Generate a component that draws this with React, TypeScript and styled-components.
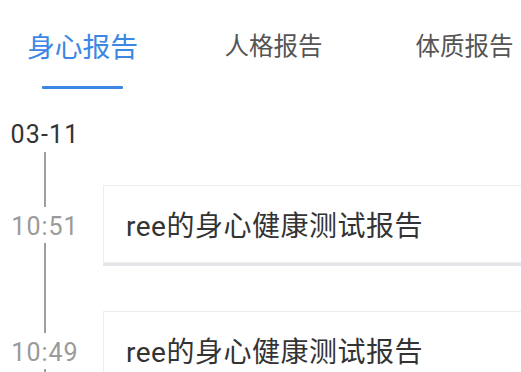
import React from "react";
import styled, { createGlobalStyle } from "styled-components";

const Global = createGlobalStyle`
  html, body { margin: 0; padding: 0; background: #fff; overflow: hidden; }
  body { font-family: Roboto, "Noto Sans CJK SC", sans-serif; }
`;

const Page = styled.div`
  width: 521px;
  height: 372px;
  overflow: hidden;
  background: #fff;
`;

const TabBar = styled.div`
  display: flex;
  margin-left: -13px;
  height: 100px;
`;

const Tab = styled.div<{ $active?: boolean }>`
  flex: none;
  width: 191px;
  display: flex;
  flex-direction: column;
  align-items: center;
  padding-top: 26px;
  box-sizing: border-box;
  font-family: "Noto Sans CJK SC", sans-serif;
  font-size: ${(p) => (p.$active ? "27.8px" : "24.5px")};
  line-height: 38px;
  color: ${(p) => (p.$active ? "#3c87e4" : "#555")};
`;

const Underline = styled.div`
  width: 81px;
  height: 3px;
  margin-top: 22px;
  background: #3c87e4;
  border-radius: 1px;
`;

const Timeline = styled.div`
  display: flex;
  flex-direction: column;
  padding-top: 20px;
`;

const DateLabel = styled.div`
  width: 90px;
  text-align: center;
  font-size: 25px;
  letter-spacing: 1.2px;
  line-height: 30px;
  color: #333;
  margin-bottom: 2px;
`;

const Entry = styled.div`
  display: flex;
  align-items: stretch;
`;

const Rail = styled.div`
  width: 90px;
  flex: none;
  display: flex;
  flex-direction: column;
  align-items: center;
`;

const Connector = styled.div<{ $h?: number }>`
  width: 2px;
  background: #9e9e9e;
  ${(p) => (p.$h ? `height: ${p.$h}px; flex: none;` : "flex: 1;")}
`;

const Time = styled.div`
  font-size: 25px;
  letter-spacing: 1px;
  line-height: 30px;
  color: #9a9a9a;
  margin: 5px 0 1px;
`;

const Card = styled.div<{ $top: number }>`
  margin: ${(p) => p.$top}px 0 24px 13px;
  width: 460px;
  height: 78px;
  box-sizing: border-box;
  flex: none;
  background: #fff;
  border: 1px solid #ededed;
  box-shadow: 0 3px 0 #e5e5ea;
  display: flex;
  align-items: center;
  padding-left: 22px;
  font-family: Roboto, "Noto Sans CJK SC", sans-serif;
  font-size: 28px;
  letter-spacing: 0.5px;
  color: #333;
  white-space: nowrap;
`;

const entries = [
  { time: "10:51", title: "ree的身心健康测试报告", conn: 55, top: 33 },
  { time: "10:49", title: "ree的身心健康测试报告", conn: 46, top: 24 },
];

export default function App() {
  return (
    <Page>
      <Global />
      <TabBar>
        <Tab $active>
          身心报告
          <Underline />
        </Tab>
        <Tab>人格报告</Tab>
        <Tab>体质报告</Tab>
      </TabBar>
      <Timeline>
        <DateLabel>03-11</DateLabel>
        {entries.map((e, i) => (
          <Entry key={i}>
            <Rail>
              <Connector $h={e.conn} />
              <Time>{e.time}</Time>
              <Connector />
            </Rail>
            <Card $top={e.top}>{e.title}</Card>
          </Entry>
        ))}
      </Timeline>
    </Page>
  );
}
